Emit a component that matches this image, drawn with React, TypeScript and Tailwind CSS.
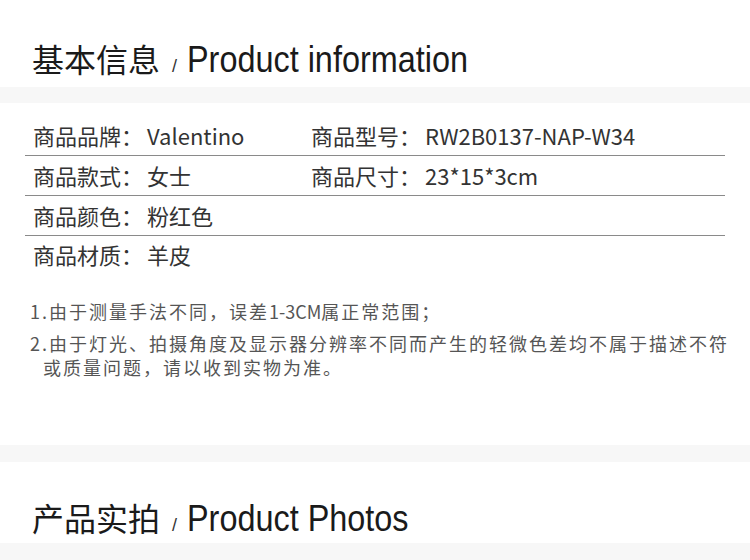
import React from "react";

const cjk = { fontFamily: '"Noto Sans CJK SC", "Noto Sans", sans-serif' };

function Title({ zh, en }: { zh: string; en: string }) {
  return (
    <div className="flex items-baseline h-[40px] leading-[40px] pl-[32px] text-[#1a1a1a] whitespace-nowrap">
      <span className="text-[32px] font-['Noto_Sans_CJK_SC',sans-serif]">{zh}</span>
      <span className="text-[18px] ml-[12px] mr-[10px] font-['Liberation_Sans',sans-serif] text-[#333]">/</span>
      <span className="inline-block origin-left scale-x-[0.9] text-[36px] font-['Liberation_Sans',sans-serif]">
        {en}
      </span>
    </div>
  );
}

const rows: [string, string, string?, string?][] = [
  ["商品品牌：", "Valentino", "商品型号：", "RW2B0137-NAP-W34"],
  ["商品款式：", "女士", "商品尺寸：", "23*15*3cm"],
  ["商品颜色：", "粉红色"],
  ["商品材质：", "羊皮"],
];

export default function App() {
  return (
    <div className="w-[750px] h-[560px] bg-white overflow-hidden" style={cjk}>
      <div className="h-[87px] pt-[38px]">
        <Title zh="基本信息" en="Product information" />
      </div>
      <div className="h-[16px] bg-[#f7f7f7]" />
      <div className="mt-[13px] mx-[25px]">
        {rows.map((r, i) => (
          <div
            key={i}
            className={`flex items-center pl-[8px] text-[22px] text-[#333] ${
              i < rows.length - 1 ? "h-[40px] border-b border-[#8a8a8a]" : "h-[36px]"
            }`}
          >
            <div className="w-[278px] flex">
              <span>{r[0]}</span>
              <span className="ml-[4px]">{r[1]}</span>
            </div>
            {r[2] && (
              <div className="flex">
                <span>{r[2]}</span>
                <span className="ml-[4px]">{r[3]}</span>
              </div>
            )}
          </div>
        ))}
      </div>
      <div className="mt-[27px] pl-[30px] text-[18px] tracking-[2px] leading-[24px] text-[#555] whitespace-nowrap">
        <p>
          1.由于测量手法不同，误差<span className="tracking-normal">1-3CM</span>属正常范围；
        </p>
        <p className="mt-[8px]">2.由于灯光、拍摄角度及显示器分辨率不同而产生的轻微色差均不属于描述不符</p>
        <p className="pl-[13px]">或质量问题，请以收到实物为准。</p>
      </div>
      <div className="mt-[66px] h-[17px] bg-[#f7f7f7]" />
      <div className="h-[81px] pt-[35px]">
        <Title zh="产品实拍" en="Product Photos" />
      </div>
      <div className="h-[17px] bg-[#f7f7f7]" />
    </div>
  );
}
